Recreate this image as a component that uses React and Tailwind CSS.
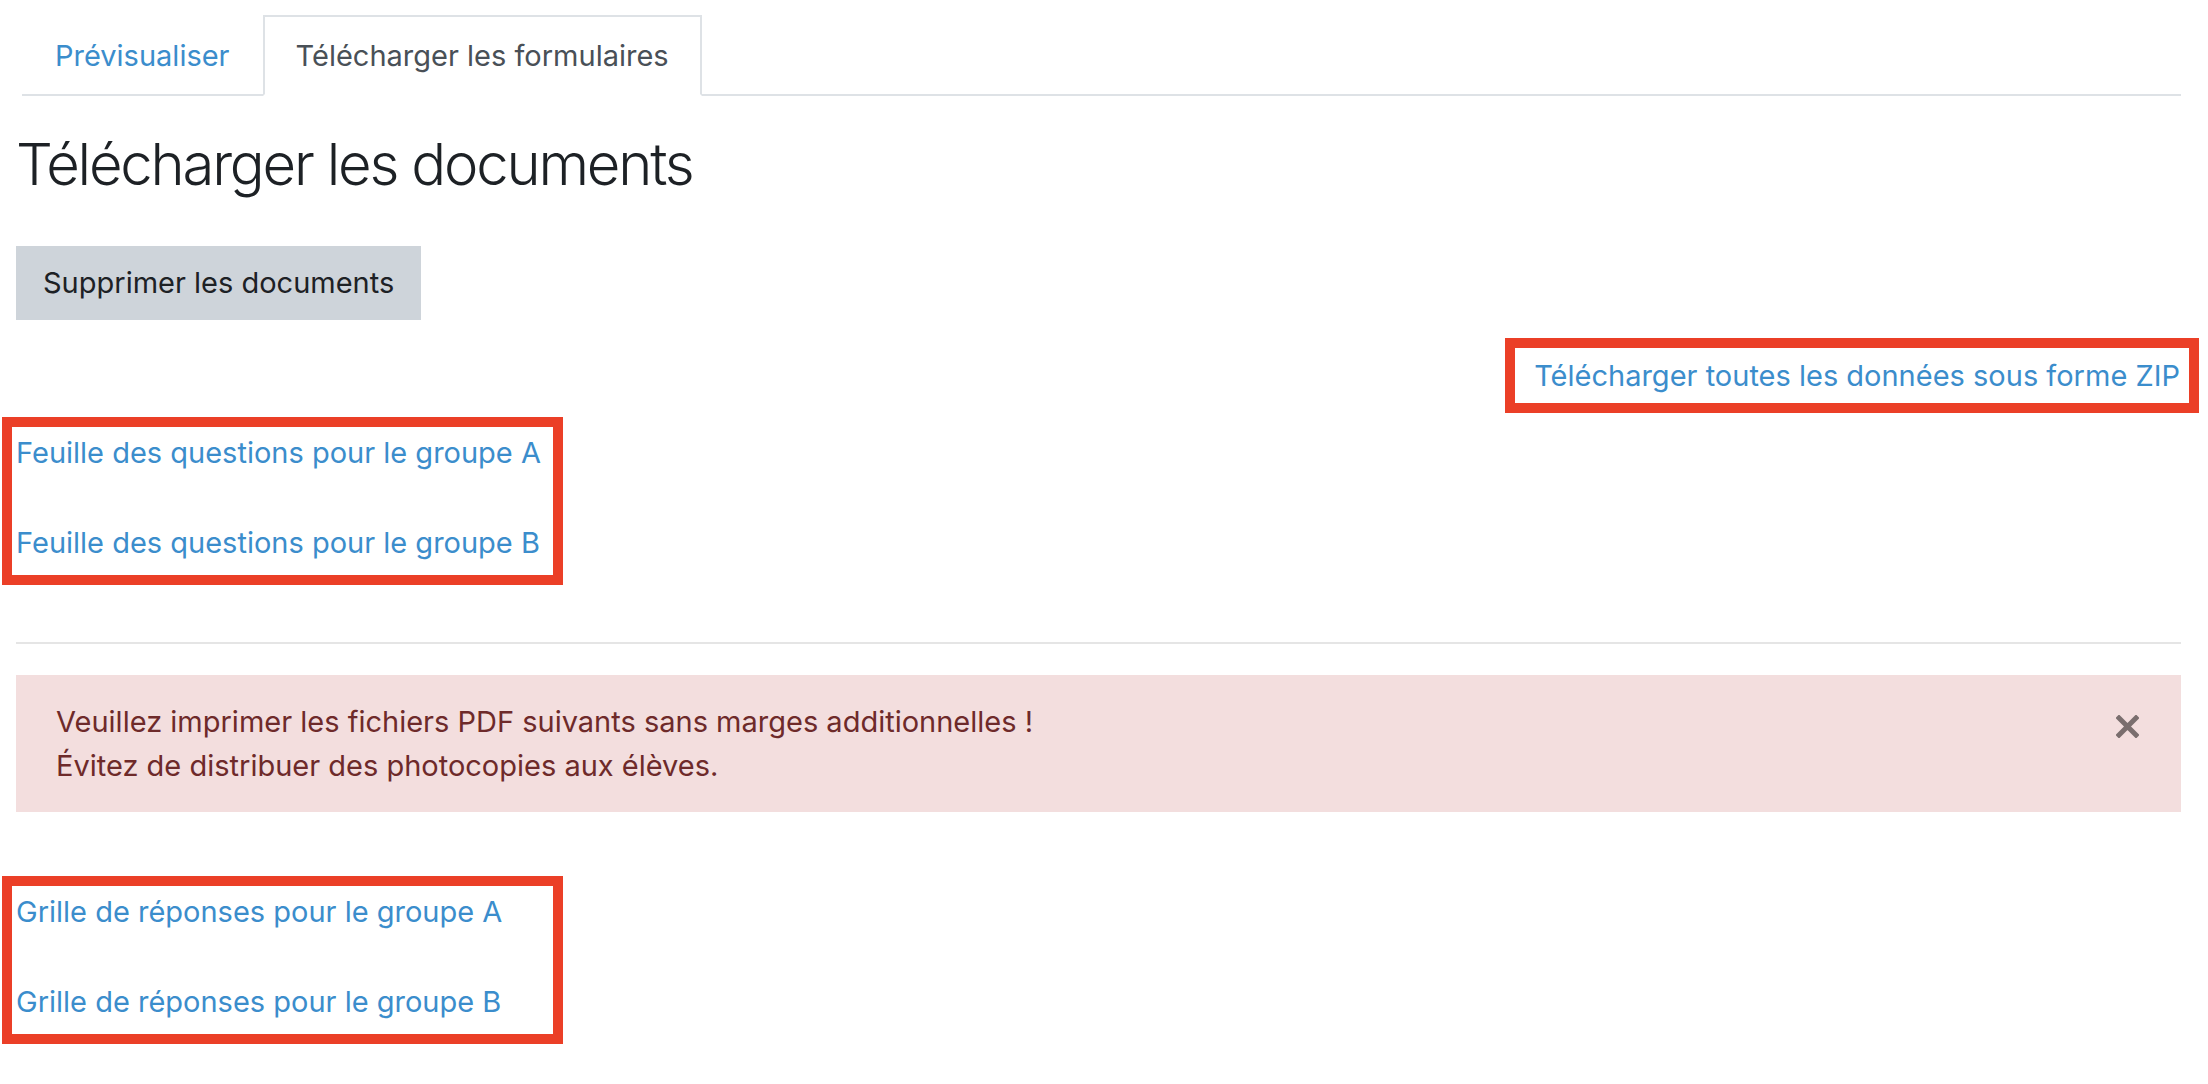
import React from 'react'

const font = { fontFamily: 'Inter, "Noto Sans", sans-serif' }

function Tabs() {
  return (
    <div className="flex ml-[6px] pt-[15px] border-b-2 border-[#dee2e6]">
      <a className="-mb-[2px] px-[31px] pt-[17px] pb-[16px] border-2 border-transparent text-[#3b8dcc] text-[29px] leading-[44px]">
        Prévisualiser
      </a>
      <a className="-mb-[2px] px-[31px] pt-[17px] pb-[16px] border-2 border-[#dee2e6] border-b-white bg-white text-[#495057] text-[29px] leading-[44px]">
        Télécharger les formulaires
      </a>
    </div>
  )
}

function LinkBox({ links, className }) {
  return (
    <div className={'-ml-[14px] w-[561px] border-[10px] border-[#eb3f27] pl-[4px] pt-[4px] pb-[10px] flex flex-col gap-[46px] ' + className}>
      {links.map((l) => (
        <a key={l} className="text-[#3b8dcc] text-[29px] leading-[44px]">{l}</a>
      ))}
    </div>
  )
}

export default function App() {
  return (
    <div className="bg-white min-h-[1084px] w-[2208px] pl-[16px] pr-[27px] text-[#1d2125]" style={font}>
      <Tabs />

      <h2 className="mt-[33px] text-[58px] leading-[70px] font-light tracking-[-2.2px]">Télécharger les documents</h2>

      <button className="mt-[47px] block bg-[#ced4da] px-[27px] py-[15px] text-[29px] leading-[44px] text-[#1d2125]">
        Supprimer les documents
      </button>

      <div className="mt-[18px] flex justify-end -mr-[18px]">
        <div className="w-[694px] border-[10px] border-[#eb3f27] pt-[6px] pb-[5px] pr-[9px] text-right">
          <a className="text-[#3b8dcc] text-[29px] leading-[44px]">Télécharger toutes les données sous forme ZIP</a>
        </div>
      </div>

      <LinkBox
        className="mt-[4px]"
        links={['Feuille des questions pour le groupe A', 'Feuille des questions pour le groupe B']}
      />

      <hr className="mt-[57px] border-0 border-t-2 border-[#e5e5e5]" />

      <div className="mt-[31px] flex items-start bg-[#f3dede] text-[#6e2a2a] pl-[40px] pr-[42px] pt-[25px] pb-[24px]">
        <div className="flex-1 text-[29px] leading-[44px]">
          <div>Veuillez imprimer les fichiers PDF suivants sans marges additionnelles !</div>
          <div>Évitez de distribuer des photocopies aux élèves.</div>
        </div>
        <svg className="mt-[15px]" width="23" height="23" viewBox="0 0 23 23">
          <path d="M3 3 L20 20 M20 3 L3 20" stroke="#7a6e6e" strokeWidth="5" strokeLinecap="square" />
        </svg>
      </div>

      <LinkBox
        className="mt-[64px]"
        links={['Grille de réponses pour le groupe A', 'Grille de réponses pour le groupe B']}
      />
    </div>
  )
}
